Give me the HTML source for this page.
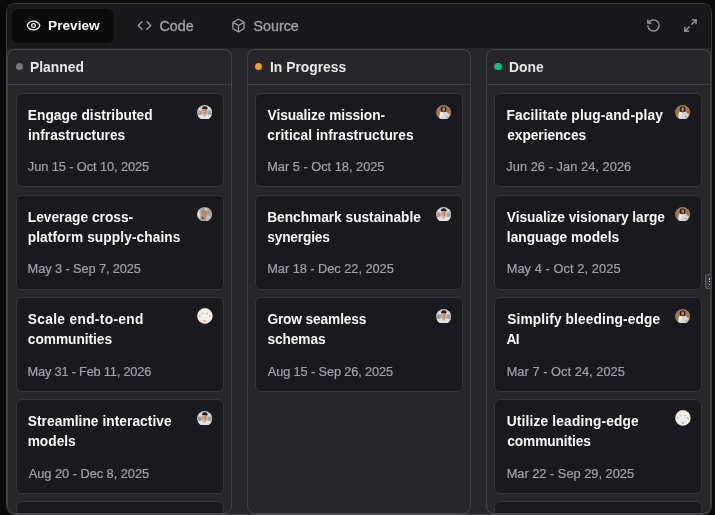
<!DOCTYPE html>
<html>
<head>
<meta charset="utf-8">
<style>
*{box-sizing:border-box;margin:0;padding:0}
html,body{width:715px;height:515px;overflow:hidden;background:#0a0a0a;font-family:"Liberation Sans",sans-serif;}
#frame{position:absolute;left:6px;top:3px;width:706px;height:512px;border:1px solid #3a3a3f;border-bottom-color:#434348;border-radius:9px;background:#18181b;overflow:hidden;will-change:transform}
#bar{position:absolute;left:0;top:0;width:704px;height:44px;background:#18181b}
.tab{position:absolute;top:4px;height:36px;font-size:13.7px;line-height:20px;color:#a1a1aa;white-space:nowrap}
.tab svg{position:absolute;top:9.5px;width:15px;height:15px;fill:none;stroke:currentColor;stroke-width:2;stroke-linecap:round;stroke-linejoin:round}
.tab span{position:absolute;top:7.5px}
.t2 span{font-size:14.3px;-webkit-text-stroke:0.3px #a1a1aa}
#t1{left:4px;width:104px;height:35.6px;background:#0a0a0a;border:1px dotted #2b2b30;border-radius:8px;color:#fafafa;font-weight:bold}
.ric{position:absolute;top:14px;width:15px;height:15px;fill:none;stroke:#a1a1aa;stroke-width:2;stroke-linecap:round;stroke-linejoin:round}
#board{position:absolute;left:0;top:44px;width:704px;height:466px;background:#27272a;overflow:hidden}
.col{position:absolute;top:1px;height:465px;border:1px solid #424248;border-bottom-color:#48484e;border-radius:8px;background:#27272a;overflow:hidden}
.hd{height:35px;border-bottom:1px solid #3f3f46;position:relative}
.dot{position:absolute;left:7.6px;top:12.7px;width:7.8px;height:7.8px;border-radius:50%}
.hd b{position:absolute;left:22px;top:7px;font-size:13.85px;line-height:20px;color:#e8e8ea;white-space:nowrap}
.cards{padding:8px 8px 0 8px}
.card{position:relative;height:94px;margin-bottom:8px;border:1px solid #35353a;border-radius:6px;background:#1a1a1e}
.card+.card{height:95px;margin-bottom:7px}
.card h3 span,.card p span{display:block}
.card h3{position:absolute;left:10.8px;top:11.6px;font-size:13.72px;line-height:20px;font-weight:bold;color:#fafafa;white-space:nowrap}
.card:nth-child(3) p,.card:nth-child(4) p{top:66px}
.card p{position:absolute;left:10.5px;top:65px;font-size:12.8px;line-height:16px;color:#a1a1aa;-webkit-text-stroke:0.2px #a1a1aa;white-space:nowrap}
.avc.av{top:10.3px;right:10.5px;width:15.8px;height:15.8px}
.av{position:absolute;right:10.6px;top:10.6px;width:15.3px;height:14.8px}
#grip{position:absolute;left:705px;top:274px;width:6.6px;height:15px;background:#38383d;border:1px solid #58585f;border-right-color:#47474d;border-radius:3px 2px 2px 3px}
#grip i{position:absolute;left:2.6px;width:1.5px;height:1.6px;background:#e4e4e7;border-radius:40%}
.c2 h3{left:11.4px}.c2 p{left:11.2px}.c3 h3{left:11.8px}.c3 p{left:11.6px}
.c2 .dot{left:6.6px}.c3 .dot{left:7.1px}
</style>
</head>
<body>
<div id="frame">
 <div id="bar">
  <div class="tab" id="t1"><svg style="left:13.7px;top:8.7px" viewBox="0 0 24 24"><path d="M2.062 12.348a1 1 0 0 1 0-.696 10.75 10.75 0 0 1 19.876 0 1 1 0 0 1 0 .696 10.75 10.75 0 0 1-19.876 0"/><circle cx="12" cy="12" r="3"/></svg><span style="left:36px;top:7px">Preview</span></div>
  <div class="tab t2" style="left:115px;width:90px"><svg style="left:15px" viewBox="0 0 24 24"><polyline points="16 18 22 12 16 6"/><polyline points="8 6 2 12 8 18"/></svg><span style="left:37.5px">Code</span></div>
  <div class="tab t2" style="left:210px;width:100px"><svg style="left:14px" viewBox="0 0 24 24"><path d="M21 8a2 2 0 0 0-1-1.73l-7-4a2 2 0 0 0-2 0l-7 4A2 2 0 0 0 3 8v8a2 2 0 0 0 1 1.73l7 4a2 2 0 0 0 2 0l7-4A2 2 0 0 0 21 16Z"/><path d="m3.3 7 8.7 5 8.7-5"/><path d="M12 22V12"/></svg><span style="left:36.5px">Source</span></div>
  <svg class="ric" style="left:639px" viewBox="0 0 24 24"><path d="M3 12a9 9 0 1 0 9-9 9.75 9.75 0 0 0-6.74 2.74L3 8"/><path d="M3 3v5h5"/></svg>
  <svg class="ric" style="left:676px" viewBox="0 0 24 24"><polyline points="15 3 21 3 21 9"/><polyline points="9 21 3 21 3 15"/><line x1="21" y1="3" x2="14" y2="10"/><line x1="3" y1="21" x2="10" y2="14"/></svg>
 </div>
 <div id="board">
  <div class="col" style="left:0;width:225px">
   <div class="hd"><span class="dot" style="background:#78787e"></span><b>Planned</b></div>
   <div class="cards" style="padding-right:7px">
    <div class="card"><h3><span style="letter-spacing:0.031px;margin-left:0.04px">Engage distributed</span><span style="letter-spacing:0.031px;margin-left:0.20px">infrastructures</span></h3><p><span style="letter-spacing:-0.093px;margin-left:0.37px">Jun 15 - Oct 10, 2025</span></p><svg class="av" viewBox="0 0 16 16" preserveAspectRatio="none"><circle cx="8" cy="8" r="7.9" fill="#c4c4c8"/><ellipse cx="2.8" cy="8.6" rx="2.2" ry="2.6" fill="#9c9ca2"/><ellipse cx="13.2" cy="8.6" rx="2.2" ry="2.6" fill="#a2a2a8"/><ellipse cx="3.6" cy="4.2" rx="2" ry="1.6" fill="#dcdcdf"/><ellipse cx="12.6" cy="4.4" rx="1.8" ry="1.6" fill="#d6d6da"/><ellipse cx="8.2" cy="3.6" rx="2.7" ry="2.3" fill="#1b1b22"/><path d="M5.2 5 Q5 4.2 6.4 4.4 L9.6 4.6 Q10.4 4.8 10.2 6 L9.8 10.5 Q8.6 12 7.2 11.6 L5.6 9Z" fill="#d6a07a"/><path d="M8.3 5 L9.3 5 L9.2 10 L8.2 10.6Z" fill="#b07a52"/><path d="M0.8 11 Q8 9.6 15.2 11 Q13.5 16 8 16 Q2.5 16 0.8 11Z" fill="#e4e2df"/><path d="M6.4 10.6 L9.8 10.2 L9 12.2 L7 12.4Z" fill="#d6a07a"/></svg></div>
    <div class="card"><h3><span style="letter-spacing:0.016px;margin-left:-0.07px">Leverage cross-</span><span style="letter-spacing:0.090px;margin-left:-0.15px">platform supply-chains</span></h3><p><span style="letter-spacing:-0.104px;margin-left:0.12px">May 3 - Sep 7, 2025</span></p><svg class="av" viewBox="0 0 16 16" preserveAspectRatio="none"><circle cx="8" cy="8" r="7.9" fill="#a4a4aa"/><path d="M0.3 8 A7.7 7.7 0 0 1 3 2.2 L3.4 13.6 A7.7 7.7 0 0 1 0.3 8Z" fill="#e2e0dc"/><rect x="3" y="2" width="1.2" height="10" fill="#caa882"/><path d="M5.4 1.6 L8.6 1.2 L9.4 3 L7.4 4 L10.6 4.2 L11 7.6 L8.2 8.6 L9.8 10.6 L8.6 14.6 L6.2 14 L7 10.4 L5 8.4 L4.8 3.6Z" fill="#b38a64"/><path d="M7.6 1.4 Q10 0.8 11.6 2.6 L10 3.8 L8 3.4Z" fill="#d2d2d6"/><path d="M5 9.6 L7 10.6 L6.4 13.6 L4.6 12.6Z" fill="#5e6270"/><path d="M9.6 9.6 Q12.6 9 14.4 11 Q13 14 10.4 15.2 L9.4 13Z" fill="#bdbdc2"/><rect x="12.4" y="1.6" width="0.9" height="4.6" fill="#b38a64"/><rect x="15" y="5.4" width="0.8" height="4" fill="#c79468"/></svg></div>
    <div class="card"><h3><span style="letter-spacing:0.336px;margin-left:-0.03px">Scale end-to-end</span><span style="letter-spacing:-0.032px;margin-left:-0.03px">communities</span></h3><p><span style="letter-spacing:-0.208px;margin-left:0.12px">May 31 - Feb 11, 2026</span></p><svg class="av avc" viewBox="0 0 16 16" preserveAspectRatio="none"><circle cx="8" cy="8" r="7.9" fill="#c9a98a"/><circle cx="8" cy="8.15" r="7.55" fill="#efeeed"/><circle cx="5.5" cy="5.4" r=".85" fill="#cbbdac"/><circle cx="10.5" cy="5.4" r=".85" fill="#cbbdac"/><circle cx="2.9" cy="8" r=".8" fill="#c49e80"/><circle cx="13.1" cy="8" r=".8" fill="#c49e80"/><circle cx="8" cy="13.1" r=".95" fill="#bf8f6c"/><circle cx="8" cy="8" r=".6" fill="#fbfbfb"/><circle cx="5" cy="11" r=".7" fill="#f9f9f9"/><circle cx="11" cy="11" r=".7" fill="#f9f9f9"/><circle cx="8" cy="3" r=".7" fill="#fafafa"/></svg></div>
    <div class="card"><h3><span style="letter-spacing:0.058px;margin-left:-0.03px">Streamline interactive</span><span style="letter-spacing:0.012px;margin-left:-0.15px">models</span></h3><p><span style="letter-spacing:-0.031px;margin-left:1.27px">Aug 20 - Dec 8, 2025</span></p><svg class="av" viewBox="0 0 16 16" preserveAspectRatio="none"><circle cx="8" cy="8" r="7.9" fill="#c4c4c8"/><ellipse cx="2.8" cy="8.6" rx="2.2" ry="2.6" fill="#9c9ca2"/><ellipse cx="13.2" cy="8.6" rx="2.2" ry="2.6" fill="#a2a2a8"/><ellipse cx="3.6" cy="4.2" rx="2" ry="1.6" fill="#dcdcdf"/><ellipse cx="12.6" cy="4.4" rx="1.8" ry="1.6" fill="#d6d6da"/><ellipse cx="8.2" cy="3.6" rx="2.7" ry="2.3" fill="#1b1b22"/><path d="M5.2 5 Q5 4.2 6.4 4.4 L9.6 4.6 Q10.4 4.8 10.2 6 L9.8 10.5 Q8.6 12 7.2 11.6 L5.6 9Z" fill="#d6a07a"/><path d="M8.3 5 L9.3 5 L9.2 10 L8.2 10.6Z" fill="#b07a52"/><path d="M0.8 11 Q8 9.6 15.2 11 Q13.5 16 8 16 Q2.5 16 0.8 11Z" fill="#e4e2df"/><path d="M6.4 10.6 L9.8 10.2 L9 12.2 L7 12.4Z" fill="#d6a07a"/></svg></div>
    <div class="card"></div>
   </div>
  </div>
  <div class="col c2" style="left:240px;width:224px">
   <div class="hd"><span class="dot" style="background:#f59e0b"></span><b>In Progress</b></div>
   <div class="cards" style="padding-left:7px;padding-right:7px">
    <div class="card"><h3><span style="letter-spacing:-0.074px;margin-left:0.22px">Visualize mission-</span><span style="letter-spacing:0.059px;margin-left:-0.07px">critical infrastructures</span></h3><p><span style="letter-spacing:-0.005px;margin-left:0.04px">Mar 5 - Oct 18, 2025</span></p><svg class="av" viewBox="0 0 16 16" preserveAspectRatio="none"><circle cx="8" cy="8" r="7.9" fill="#9f7950"/><ellipse cx="7.9" cy="4.6" rx="3" ry="3.1" fill="#1c1c24"/><ellipse cx="8.1" cy="4.6" rx="1.45" ry="2.1" fill="#b8865a"/><path d="M4.2 8.2 Q8 6.6 11.6 7.8 L14.6 10.6 Q13 15.9 8 15.9 Q5.2 15.9 3.4 13.8Z" fill="#d6d6d8"/><path d="M4.2 8.2 Q6 7.4 7.4 7.4 L8 9 L6 13 L3.6 13.6Z" fill="#ececee"/><path d="M7.3 7.3 L8.7 7.3 L8 8.9Z" fill="#c4763c"/><path d="M10 11 L13.6 12.8 Q12.6 14.6 11 15.4Z" fill="#b9b9bd"/></svg></div>
    <div class="card"><h3><span style="letter-spacing:-0.015px;margin-left:-0.26px">Benchmark sustainable</span><span style="letter-spacing:-0.178px;margin-left:-0.16px">synergies</span></h3><p><span style="letter-spacing:-0.037px;margin-left:0.04px">Mar 18 - Dec 22, 2025</span></p><svg class="av" viewBox="0 0 16 16" preserveAspectRatio="none"><circle cx="8" cy="8" r="7.9" fill="#c4c4c8"/><ellipse cx="2.8" cy="8.6" rx="2.2" ry="2.6" fill="#9c9ca2"/><ellipse cx="13.2" cy="8.6" rx="2.2" ry="2.6" fill="#a2a2a8"/><ellipse cx="3.6" cy="4.2" rx="2" ry="1.6" fill="#dcdcdf"/><ellipse cx="12.6" cy="4.4" rx="1.8" ry="1.6" fill="#d6d6da"/><ellipse cx="8.2" cy="3.6" rx="2.7" ry="2.3" fill="#1b1b22"/><path d="M5.2 5 Q5 4.2 6.4 4.4 L9.6 4.6 Q10.4 4.8 10.2 6 L9.8 10.5 Q8.6 12 7.2 11.6 L5.6 9Z" fill="#d6a07a"/><path d="M8.3 5 L9.3 5 L9.2 10 L8.2 10.6Z" fill="#b07a52"/><path d="M0.8 11 Q8 9.6 15.2 11 Q13.5 16 8 16 Q2.5 16 0.8 11Z" fill="#e4e2df"/><path d="M6.4 10.6 L9.8 10.2 L9 12.2 L7 12.4Z" fill="#d6a07a"/></svg></div>
    <div class="card"><h3><span style="letter-spacing:-0.130px;margin-left:-0.03px">Grow seamless</span><span style="letter-spacing:-0.076px;margin-left:-0.03px">schemas</span></h3><p><span style="letter-spacing:-0.134px;margin-left:0.59px">Aug 15 - Sep 26, 2025</span></p><svg class="av" viewBox="0 0 16 16" preserveAspectRatio="none"><circle cx="8" cy="8" r="7.9" fill="#c4c4c8"/><ellipse cx="2.8" cy="8.6" rx="2.2" ry="2.6" fill="#9c9ca2"/><ellipse cx="13.2" cy="8.6" rx="2.2" ry="2.6" fill="#a2a2a8"/><ellipse cx="3.6" cy="4.2" rx="2" ry="1.6" fill="#dcdcdf"/><ellipse cx="12.6" cy="4.4" rx="1.8" ry="1.6" fill="#d6d6da"/><ellipse cx="8.2" cy="3.6" rx="2.7" ry="2.3" fill="#1b1b22"/><path d="M5.2 5 Q5 4.2 6.4 4.4 L9.6 4.6 Q10.4 4.8 10.2 6 L9.8 10.5 Q8.6 12 7.2 11.6 L5.6 9Z" fill="#d6a07a"/><path d="M8.3 5 L9.3 5 L9.2 10 L8.2 10.6Z" fill="#b07a52"/><path d="M0.8 11 Q8 9.6 15.2 11 Q13.5 16 8 16 Q2.5 16 0.8 11Z" fill="#e4e2df"/><path d="M6.4 10.6 L9.8 10.2 L9 12.2 L7 12.4Z" fill="#d6a07a"/></svg></div>
   </div>
  </div>
  <div class="col c3" style="left:479px;width:225px">
   <div class="hd"><span class="dot" style="background:#10b981"></span><b>Done</b></div>
   <div class="cards" style="padding-left:7px;padding-right:8px">
    <div class="card"><h3><span style="letter-spacing:0.138px;margin-left:-0.24px">Facilitate plug-and-play</span><span style="letter-spacing:-0.040px;margin-left:0.46px">experiences</span></h3><p><span style="letter-spacing:0.054px;margin-left:-0.30px">Jun 26 - Jan 24, 2026</span></p><svg class="av" viewBox="0 0 16 16" preserveAspectRatio="none"><circle cx="8" cy="8" r="7.9" fill="#9f7950"/><ellipse cx="7.9" cy="4.6" rx="3" ry="3.1" fill="#1c1c24"/><ellipse cx="8.1" cy="4.6" rx="1.45" ry="2.1" fill="#b8865a"/><path d="M4.2 8.2 Q8 6.6 11.6 7.8 L14.6 10.6 Q13 15.9 8 15.9 Q5.2 15.9 3.4 13.8Z" fill="#d6d6d8"/><path d="M4.2 8.2 Q6 7.4 7.4 7.4 L8 9 L6 13 L3.6 13.6Z" fill="#ececee"/><path d="M7.3 7.3 L8.7 7.3 L8 8.9Z" fill="#c4763c"/><path d="M10 11 L13.6 12.8 Q12.6 14.6 11 15.4Z" fill="#b9b9bd"/></svg></div>
    <div class="card"><h3><span style="letter-spacing:-0.042px;margin-left:0.04px">Visualize visionary large</span><span style="letter-spacing:0.019px;margin-left:0.06px">language models</span></h3><p><span style="letter-spacing:0.082px;margin-left:0.05px">May 4 - Oct 2, 2025</span></p><svg class="av" viewBox="0 0 16 16" preserveAspectRatio="none"><circle cx="8" cy="8" r="7.9" fill="#9f7950"/><ellipse cx="7.9" cy="4.6" rx="3" ry="3.1" fill="#1c1c24"/><ellipse cx="8.1" cy="4.6" rx="1.45" ry="2.1" fill="#b8865a"/><path d="M4.2 8.2 Q8 6.6 11.6 7.8 L14.6 10.6 Q13 15.9 8 15.9 Q5.2 15.9 3.4 13.8Z" fill="#d6d6d8"/><path d="M4.2 8.2 Q6 7.4 7.4 7.4 L8 9 L6 13 L3.6 13.6Z" fill="#ececee"/><path d="M7.3 7.3 L8.7 7.3 L8 8.9Z" fill="#c4763c"/><path d="M10 11 L13.6 12.8 Q12.6 14.6 11 15.4Z" fill="#b9b9bd"/></svg></div>
    <div class="card"><h3><span style="letter-spacing:0.136px;margin-left:0.42px">Simplify bleeding-edge</span><span style="letter-spacing:-0.629px;margin-left:-0.22px">AI</span></h3><p><span style="letter-spacing:0.046px;margin-left:0.05px">Mar 7 - Oct 24, 2025</span></p><svg class="av" viewBox="0 0 16 16" preserveAspectRatio="none"><circle cx="8" cy="8" r="7.9" fill="#9f7950"/><ellipse cx="7.9" cy="4.6" rx="3" ry="3.1" fill="#1c1c24"/><ellipse cx="8.1" cy="4.6" rx="1.45" ry="2.1" fill="#b8865a"/><path d="M4.2 8.2 Q8 6.6 11.6 7.8 L14.6 10.6 Q13 15.9 8 15.9 Q5.2 15.9 3.4 13.8Z" fill="#d6d6d8"/><path d="M4.2 8.2 Q6 7.4 7.4 7.4 L8 9 L6 13 L3.6 13.6Z" fill="#ececee"/><path d="M7.3 7.3 L8.7 7.3 L8 8.9Z" fill="#c4763c"/><path d="M10 11 L13.6 12.8 Q12.6 14.6 11 15.4Z" fill="#b9b9bd"/></svg></div>
    <div class="card"><h3><span style="letter-spacing:0.165px;margin-left:0.01px">Utilize leading-edge</span><span style="letter-spacing:-0.106px;margin-left:0.46px">communities</span></h3><p><span style="letter-spacing:0.003px;margin-left:0.05px">Mar 22 - Sep 29, 2025</span></p><svg class="av avc" viewBox="0 0 16 16" preserveAspectRatio="none"><circle cx="8" cy="8" r="7.9" fill="#c9a98a"/><circle cx="8" cy="8.15" r="7.55" fill="#efeeed"/><circle cx="5.5" cy="5.4" r=".85" fill="#cbbdac"/><circle cx="10.5" cy="5.4" r=".85" fill="#cbbdac"/><circle cx="2.9" cy="8" r=".8" fill="#c49e80"/><circle cx="13.1" cy="8" r=".8" fill="#c49e80"/><circle cx="8" cy="13.1" r=".95" fill="#bf8f6c"/><circle cx="8" cy="8" r=".6" fill="#fbfbfb"/><circle cx="5" cy="11" r=".7" fill="#f9f9f9"/><circle cx="11" cy="11" r=".7" fill="#f9f9f9"/><circle cx="8" cy="3" r=".7" fill="#fafafa"/></svg></div>
    <div class="card"></div>
   </div>
  </div>
 </div>
</div>
<div id="grip"><i style="top:3px;height:2.2px"></i><i style="top:5.9px"></i><i style="top:8.7px"></i></div>
</body>
</html>
